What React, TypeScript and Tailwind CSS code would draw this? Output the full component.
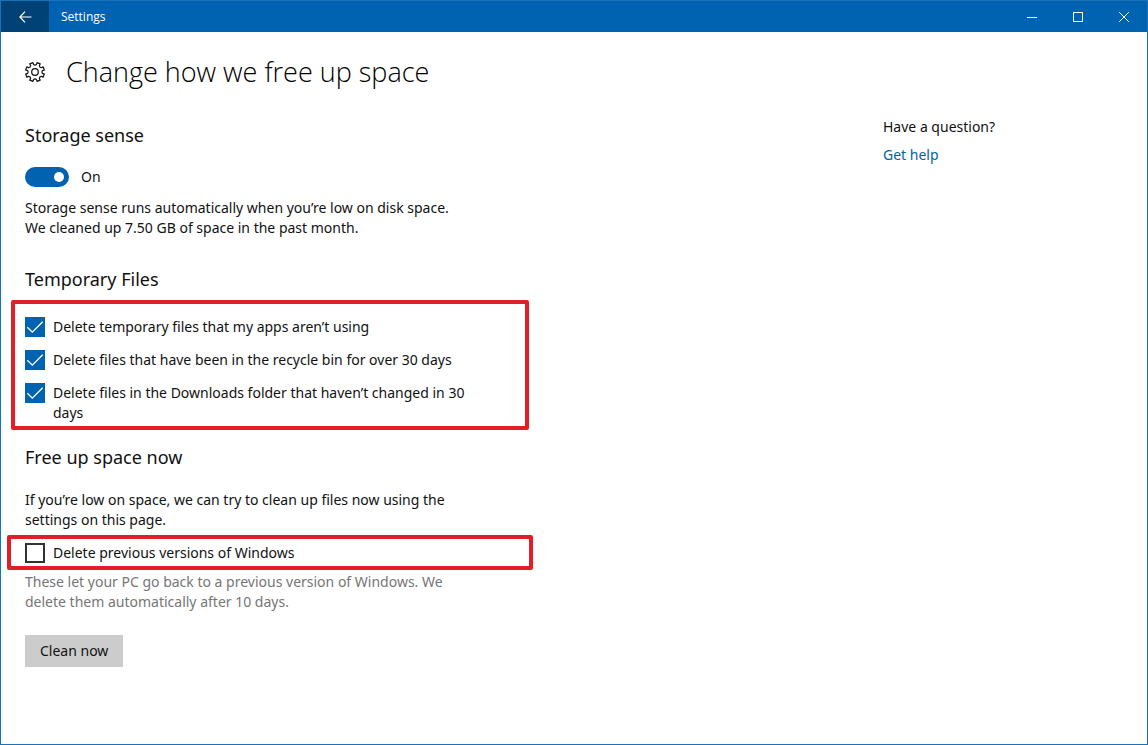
import { useState, type ReactNode } from "react";

const point = (radius: number, degrees: number) => {
  const a = (degrees * Math.PI) / 180;
  return `${(10 + radius * Math.cos(a)).toFixed(2)} ${(10 + radius * Math.sin(a)).toFixed(2)}`;
};

const gearPath =
  Array.from({ length: 8 }, (_, i) => {
    const c = i * 45 + 22.5;
    return `${i === 0 ? "M" : "L"}${point(7.6, c - 12)} L${point(9.6, c - 10)} L${point(9.6, c + 10)} L${point(7.6, c + 12)} Q${point(6.4, c + 22.5)} ${point(7.6, c + 33)}`;
  }).join(" ") + " Z";

function GearIcon() {
  return (
    <svg width="20" height="20" viewBox="0 0 20 20" fill="none" stroke="#111" strokeWidth="1.2" strokeLinejoin="round" aria-hidden="true">
      <path d={gearPath} />
      <circle cx="10" cy="10" r="3.3" />
    </svg>
  );
}

function CheckOption({ children, defaultChecked = false }: { children: ReactNode; defaultChecked?: boolean }) {
  return (
    <label className="flex items-start gap-2">
      <span className="grid shrink-0">
        <input
          type="checkbox"
          defaultChecked={defaultChecked}
          className="peer col-start-1 row-start-1 size-5 appearance-none border-2 border-[#333] bg-white checked:border-[#0063b1] checked:bg-[#0063b1]"
        />
        <svg className="pointer-events-none invisible col-start-1 row-start-1 peer-checked:visible" width="20" height="20" viewBox="0 0 20 20" fill="none" stroke="#fff" strokeWidth="1.3" aria-hidden="true">
          <path d="M2.3 10.2 7.3 15.2 17.7 4.8" />
        </svg>
      </span>
      <span>{children}</span>
    </label>
  );
}

function WindowButton({ label, path }: { label: string; path: string }) {
  return (
    <button type="button" aria-label={label} className="flex w-[46px] items-center justify-center hover:bg-white/10">
      <svg width="10" height="10" viewBox="0 0 10 10" fill="none" stroke="#fff" aria-hidden="true">
        <path d={path} />
      </svg>
    </button>
  );
}

export default function App() {
  const [on, setOn] = useState(true);
  return (
    <div className="flex min-h-screen flex-col border border-[#1c72b8] bg-white font-['Noto_Sans','Open_Sans',sans-serif] text-sm leading-5 text-[#111]">
      <header className="flex h-[31px] bg-[#0063b1] font-['Open_Sans',sans-serif] text-white">
        <button type="button" aria-label="Back" className="flex w-12 items-center justify-center bg-[#004275]">
          <svg width="13" height="12" viewBox="0 0 13 12" fill="none" stroke="#fff" strokeWidth="1.2" aria-hidden="true">
            <path d="M6 .7 .9 6 6 11.3M.9 6H12.5" />
          </svg>
        </button>
        <span className="flex flex-1 items-center px-3 text-xs">Settings</span>
        <WindowButton label="Minimize" path="M0 5.5H10" />
        <WindowButton label="Maximize" path="M.5 .5H9.5V9.5H.5Z" />
        <WindowButton label="Close" path="M.2 .2 9.8 9.8M9.8 .2 .2 9.8" />
      </header>

      <div className="flex items-center gap-[21px] px-6 pt-5">
        <GearIcon />
        <h1 className="font-['Open_Sans',sans-serif] text-[27px] leading-10 font-light text-black">
          Change how we free up space
        </h1>
      </div>

      <div className="flex justify-between gap-8 pb-8">
        <main className="w-[538px] px-[6px]">
          <section className="px-[18px] pt-[29px]">
            <h2 className="text-lg leading-7">Storage sense</h2>
            <label className="mt-[18px] flex w-fit items-center gap-3">
              <input
                type="checkbox"
                role="switch"
                aria-label="Storage sense"
                checked={on}
                onChange={(e) => setOn(e.target.checked)}
                className="flex h-5 w-11 appearance-none items-center rounded-full border-2 border-[#333] px-[3px] before:size-[10px] before:rounded-full before:bg-[#333] checked:justify-end checked:border-[#0063b1] checked:bg-[#0063b1] checked:before:bg-white"
              />
              <span>{on ? "On" : "Off"}</span>
            </label>
            <p className="mt-[11px]">
              Storage sense runs automatically when you’re low on disk space.
              <br />
              We cleaned up 7.50 GB of space in the past month.
            </p>
          </section>

          <section className="pt-[27px]">
            <h2 className="px-[18px] text-lg leading-7">Temporary Files</h2>
            <div className="mx-1 mt-[7px] flex flex-col gap-[13px] rounded-xs border-4 border-[#e31e26] px-[10px] pt-[13px] pb-[3px]">
              <CheckOption defaultChecked>Delete temporary files that my apps aren’t using</CheckOption>
              <CheckOption defaultChecked>Delete files that have been in the recycle bin for over 30 days</CheckOption>
              <CheckOption defaultChecked>
                Delete files in the Downloads folder that haven’t changed in 30
                <br />
                days
              </CheckOption>
            </div>
          </section>

          <section className="pt-[13px]">
            <h2 className="px-[18px] text-lg leading-7">Free up space now</h2>
            <p className="mt-[19px] px-[18px]">
              If you’re low on space, we can try to clean up files now using the
              <br />
              settings on this page.
            </p>
            <div className="mt-[5px] rounded-xs border-4 border-[#e31e26] px-[14px] pt-1 pb-[3px]">
              <CheckOption>Delete previous versions of Windows</CheckOption>
            </div>
            <div className="px-[18px] pt-[2px]">
              <p className="text-[#767676]">
                These let your PC go back to a previous version of Windows. We
                <br />
                delete them automatically after 10 days.
              </p>
              <button type="button" className="mt-[23px] h-8 bg-[#ccc] px-[15px] text-[#111]">
                Clean now
              </button>
            </div>
          </section>
        </main>

        <aside className="w-[264px] pt-[25px]">
          <p>Have a question?</p>
          <a href="#help" className="mt-2 block w-fit text-[#00659b]">
            Get help
          </a>
        </aside>
      </div>
    </div>
  );
}
